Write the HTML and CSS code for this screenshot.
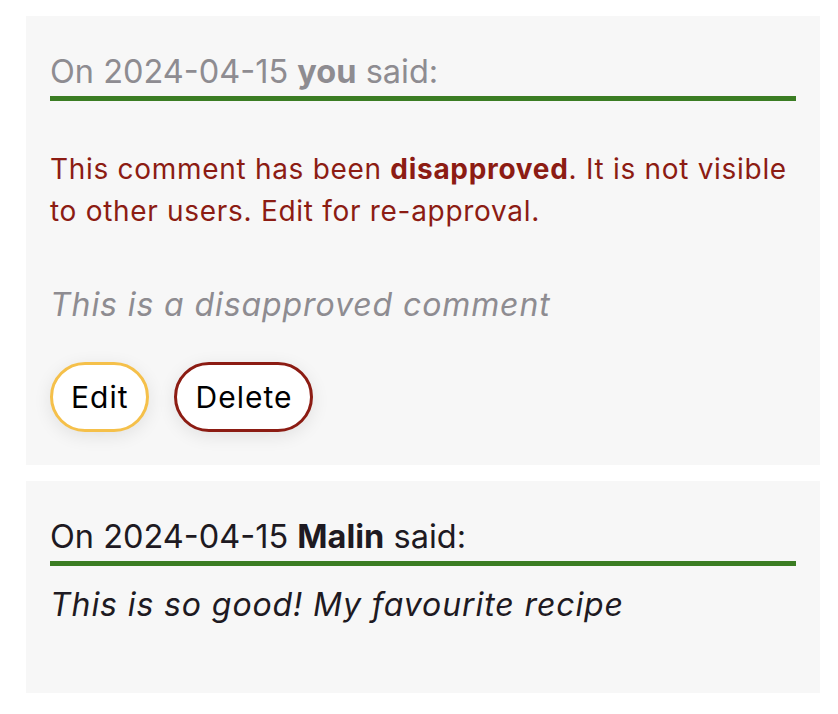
FILE: index.html
```html
<!DOCTYPE html>
<html lang="en">
<head>
<meta charset="utf-8">
<title>Comments</title>
<link rel="stylesheet" href="styles.css">
</head>
<body>
<div class="comments">
  <article class="comment comment--disapproved">
    <h3 class="comment__header">On 2024-04-15 <strong>you</strong> said:</h3>
    <p class="comment__notice">This comment has been <strong>disapproved</strong>. It is not visible to other users. Edit for re-approval.</p>
    <p class="comment__body">This is a disapproved comment</p>
    <div class="comment__actions">
      <button class="btn btn--edit" type="button">Edit</button>
      <button class="btn btn--delete" type="button">Delete</button>
    </div>
  </article>
  <article class="comment">
    <h3 class="comment__header">On 2024-04-15 <strong>Malin</strong> said:</h3>
    <p class="comment__body">This is so good! My favourite recipe</p>
  </article>
</div>
</body>
</html>
```
FILE: styles.css
```css
* { box-sizing: border-box; }
body {
  margin: 0;
  background: #ffffff;
  font-family: Inter, "Noto Sans", sans-serif;
  color: #1e1a22;
}
.comments {
  padding: 16px 18px 0 26px;
  display: flex;
  flex-direction: column;
  gap: 16px;
}
.comment {
  background: #f7f7f7;
  padding: 32px 24px 67px;
}
.comment--disapproved {
  padding-bottom: 33px;
  color: #8e8c91;
}
.comment__header {
  margin: 0;
  font-size: 32.5px;
  font-weight: 400;
  line-height: 48px;
  border-bottom: 5px solid #3b7d23;
}
.comment__header strong { font-weight: 700; }
.comment__notice {
  margin: 47px 0 0;
  font-size: 28px;
  line-height: 42px;
  letter-spacing: 0.7px;
  color: #8c1c13;
}
.comment__notice strong { font-weight: 700; }
.comment__body {
  margin: 18px 0 0;
  font-size: 32px;
  line-height: 42px;
  letter-spacing: 0.9px;
  font-style: italic;
}
.comment--disapproved .comment__body { margin-top: 52px; }
.comment__actions {
  margin-top: 36px;
  display: flex;
  gap: 25px;
}
.btn {
  font-family: Inter, "Noto Sans", sans-serif;
  font-size: 30px;
  line-height: 40px;
  letter-spacing: 1px;
  padding: 12px 18px;
  background: #ffffff;
  color: #000000;
  border: 3px solid;
  border-radius: 999px;
  box-shadow: 0 4px 18px rgba(0, 0, 0, 0.09);
  cursor: pointer;
}
.btn--edit { border-color: #f5c04a; }
.btn--delete { border-color: #8c1c13; }
```
